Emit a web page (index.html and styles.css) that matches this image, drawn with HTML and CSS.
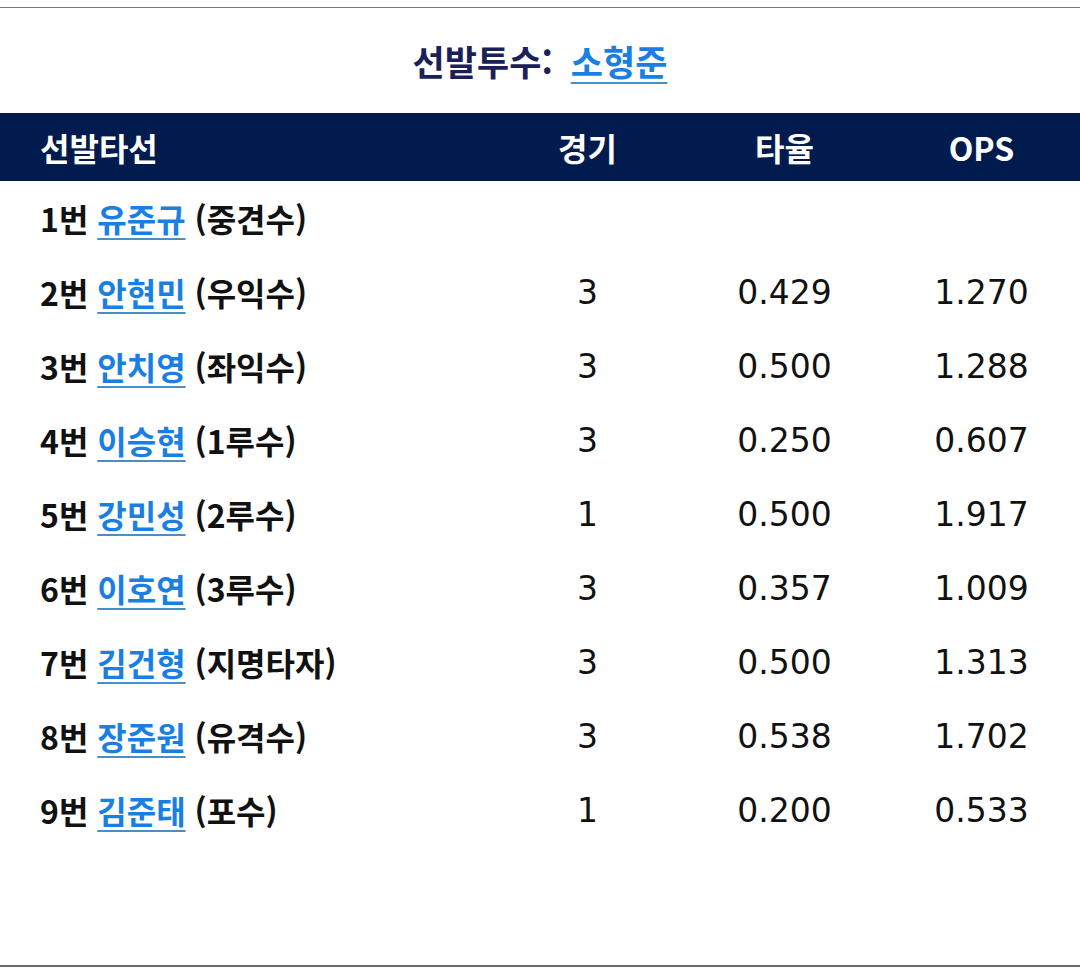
FILE: index.html
```html
<!DOCTYPE html>
<html lang="ko">
<head>
<meta charset="utf-8">
<link rel="stylesheet" href="styles.css">
</head>
<body>
<div class="panel">
  <div class="pitcher">
    <span class="pitcher-label">선발투수:</span>
    <a class="player" href="#">소형준</a>
  </div>
  <table class="lineup">
    <thead>
      <tr>
        <th class="col-name">선발타선</th>
        <th>경기</th>
        <th>타율</th>
        <th>OPS</th>
      </tr>
    </thead>
    <tbody>
      <tr><td class="col-name">1번 <a class="player" href="#">유준규</a> (중견수)</td><td></td><td></td><td></td></tr>
      <tr><td class="col-name">2번 <a class="player" href="#">안현민</a> (우익수)</td><td class="num">3</td><td class="num">0.429</td><td class="num">1.270</td></tr>
      <tr><td class="col-name">3번 <a class="player" href="#">안치영</a> (좌익수)</td><td class="num">3</td><td class="num">0.500</td><td class="num">1.288</td></tr>
      <tr><td class="col-name">4번 <a class="player" href="#">이승현</a> (1루수)</td><td class="num">3</td><td class="num">0.250</td><td class="num">0.607</td></tr>
      <tr><td class="col-name">5번 <a class="player" href="#">강민성</a> (2루수)</td><td class="num">1</td><td class="num">0.500</td><td class="num">1.917</td></tr>
      <tr><td class="col-name">6번 <a class="player" href="#">이호연</a> (3루수)</td><td class="num">3</td><td class="num">0.357</td><td class="num">1.009</td></tr>
      <tr><td class="col-name">7번 <a class="player" href="#">김건형</a> (지명타자)</td><td class="num">3</td><td class="num">0.500</td><td class="num">1.313</td></tr>
      <tr><td class="col-name">8번 <a class="player" href="#">장준원</a> (유격수)</td><td class="num">3</td><td class="num">0.538</td><td class="num">1.702</td></tr>
      <tr><td class="col-name">9번 <a class="player" href="#">김준태</a> (포수)</td><td class="num">1</td><td class="num">0.200</td><td class="num">0.533</td></tr>
    </tbody>
  </table>
</div>
</body>
</html>
```
FILE: styles.css
```css
html, body {
  margin: 0;
  padding: 0;
  background: #ffffff;
}
body {
  font-family: "Noto Sans CJK KR", "Noto Sans", sans-serif;
  color: #111111;
  padding-top: 7px;
}
.panel {
  border-top: 1px solid #777777;
  border-bottom: 2px solid #6a6a6a;
  height: 960px;
  box-sizing: border-box;
}
.pitcher {
  height: 105px;
  display: flex;
  align-items: center;
  justify-content: center;
  gap: 18px;
  font-size: 35px;
  font-weight: 700;
  color: #1b2158;
}
.player {
  color: #1a7fe3;
  text-decoration: underline;
  text-decoration-color: #4a8ec6;
  text-decoration-thickness: 1.5px;
  text-underline-offset: 6px;
}
.lineup {
  width: 100%;
  border-collapse: collapse;
  table-layout: fixed;
}
.lineup thead tr {
  background: #011b4e;
  color: #ffffff;
  height: 68px;
}
.lineup th {
  font-size: 32px;
  font-weight: 700;
  text-align: center;
  padding: 0;
  width: 197px;
}
.lineup th.col-name {
  text-align: left;
  width: auto;
  padding-left: 40px;
}
.lineup tbody tr {
  height: 74px;
}
.lineup td {
  padding: 0;
  font-size: 32px;
  font-weight: 600;
  text-align: center;
}
.lineup td.col-name {
  text-align: left;
  padding-left: 40px;
}
.lineup td.num {
  font-family: "DejaVu Sans", "Noto Sans CJK KR", sans-serif;
  font-weight: 400;
  font-size: 33px;
}
```
